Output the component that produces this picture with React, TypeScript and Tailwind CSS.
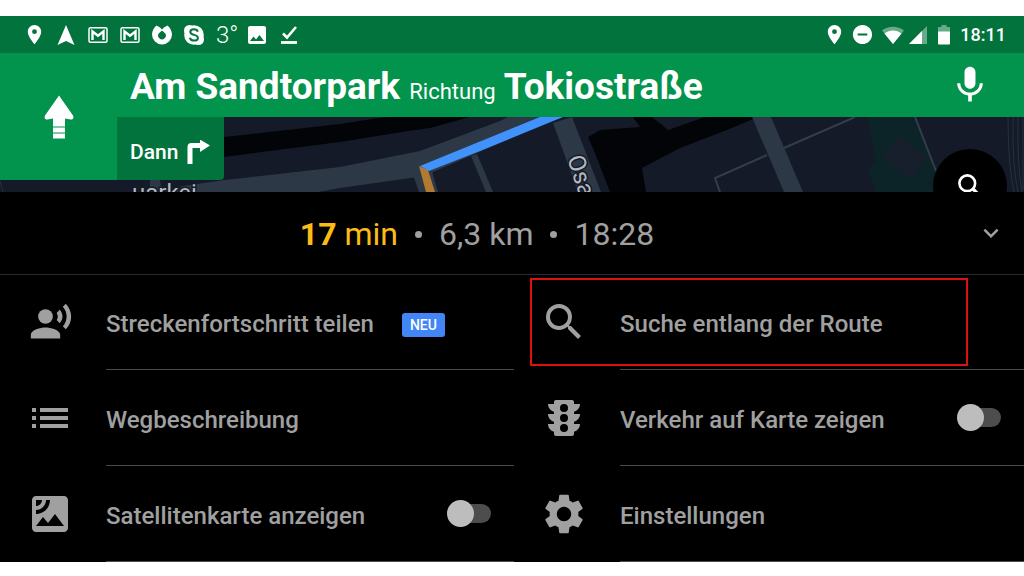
import { useId, useState } from "react";
import type { ReactNode } from "react";
import {
  MdDoNotDisturbOn,
  MdExpandMore,
  MdImage,
  MdList,
  MdLocationOn,
  MdMic,
  MdRecordVoiceOver,
  MdSatellite,
  MdSearch,
  MdSettings,
} from "react-icons/md";

function GmailIcon() {
  return (
    <svg viewBox="0 0 20 16" className="h-4 w-5" aria-hidden="true">
      <rect x="1" y="0.8" width="18" height="14.400" rx="1.500" fill="none" stroke="currentColor" strokeWidth="1.500" />
      <path d="M4.500 13V4.500L10 8.800L15.500 4.500V13" fill="none" stroke="currentColor" strokeWidth="2.400" />
    </svg>
  );
}

function TrafficLightIcon() {
  return (
    <svg viewBox="0 0 24 24" className="size-12" aria-hidden="true">
      <path
        fill="currentColor"
        fillRule="evenodd"
        d="M20 10H17V8.860C18.720 8.410 20 6.860 20 5H17V4C17 3.450 16.550 3 16 3H8C7.450 3 7 3.450 7 4V5H4C4 6.860 5.280 8.410 7 8.860V10H4C4 11.860 5.280 13.410 7 13.860V15H4C4 16.860 5.280 18.410 7 18.860V20C7 20.550 7.450 21 8 21H16C16.550 21 17 20.550 17 20V18.860C18.720 18.410 20 16.860 20 15H17V13.860C18.720 13.410 20 11.860 20 10ZM12 19A2 2 0 1 1 12 15A2 2 0 0 1 12 19ZM12 14A2 2 0 1 1 12 10A2 2 0 0 1 12 14ZM12 9A2 2 0 1 1 12 5A2 2 0 0 1 12 9Z"
      />
    </svg>
  );
}

function StatusBar() {
  return (
    <div className="flex h-[37px] items-center justify-between bg-[#02733c] pr-[18px] pl-[18px]">
      <div className="flex items-center">
        <div className="grid grid-cols-[repeat(6,32px)] place-items-center">
          <MdLocationOn className="size-[23px]" />
          <svg viewBox="0 0 18 22" className="h-[22px] w-[18px]" aria-hidden="true">
            <path d="M9 1L17.500 21L9 17L0.500 21Z" fill="currentColor" />
          </svg>
          <GmailIcon />
          <GmailIcon />
          <svg viewBox="0 0 20 20" className="size-5" aria-hidden="true">
            <path
              d="M4.500 0.500L8 2.500L10 4.500L12 2.500L15.500 0.500C18 2.500 20 6 20 9.500A10 10 0 0 1 0 9.500C0 6 2 2.500 4.500 0.500ZM10 5.500L7.200 8A3.800 3.800 0 1 0 12.800 8Z"
              fill="currentColor"
              fillRule="evenodd"
            />
          </svg>
          <svg viewBox="0 0 22 22" className="size-[22px]" aria-hidden="true">
            <circle cx="11" cy="11" r="9.800" fill="currentColor" />
            <circle cx="6.500" cy="6.500" r="5.500" fill="currentColor" />
            <circle cx="15.500" cy="15.500" r="5.500" fill="currentColor" />
            <path
              d="M14.800 7.800C14.300 5.900 12.800 5.300 11 5.300C8.900 5.300 7.300 6.300 7.300 8C7.300 11.700 14.900 10 14.900 13.700C14.900 15.500 13.200 16.600 11 16.600C8.900 16.600 7.300 15.700 6.900 13.700"
              fill="none"
              stroke="#02733c"
              strokeWidth="2"
            />
          </svg>
        </div>
        <span className="ml-1.5 text-2xl leading-6 font-light">3°</span>
        <MdImage className="ml-[7px] size-6" />
        <svg viewBox="0 0 18 20" className="ml-[11px] h-5 w-[18px]" aria-hidden="true">
          <path d="M3 8.500L7 12.500L16 2" fill="none" stroke="currentColor" strokeWidth="2.600" />
          <path d="M1 17.500H17" stroke="currentColor" strokeWidth="2.800" />
        </svg>
      </div>
      <div className="flex items-center">
        <MdLocationOn className="size-[23px]" />
        <MdDoNotDisturbOn className="ml-[5px] size-[23px]" />
        <svg viewBox="0 0 24 20" className="ml-[7px] h-5 w-6" aria-hidden="true">
          <path d="M1 5.500C7.500 0.500 16.500 0.500 23 5.500L12 19Z" fill="currentColor" opacity="0.4" />
          <path d="M3.500 8.500C8.500 4.500 15.500 4.500 20.500 8.500L12 19Z" fill="currentColor" />
        </svg>
        <svg viewBox="0 0 20 20" className="ml-[3px] size-5" aria-hidden="true">
          <path d="M19 1V19H1Z" fill="currentColor" opacity="0.4" />
          <path d="M14 6V19H1Z" fill="currentColor" />
        </svg>
        <svg viewBox="0 0 12 20" className="ml-2.5 h-5 w-3" aria-hidden="true">
          <path d="M3.500 0H8.500V2H12V7H0V2H3.500Z" fill="currentColor" opacity="0.4" />
          <path d="M0 6.500H12V18.500Q12 19.500 11 19.500H1Q0 19.500 0 18.500Z" fill="currentColor" />
        </svg>
        <span className="ml-2.5 text-[18px] leading-6 font-medium">18:11</span>
      </div>
    </div>
  );
}

function MapView() {
  return (
    <svg
      viewBox="0 117 1024 75"
      preserveAspectRatio="xMidYMid slice"
      className="col-span-full row-start-2 h-full w-full bg-[#141a27]"
      aria-hidden="true"
    >
      <g fill="#020407">
        <path d="M224 137L340 124L385 117H470L430 128L408 131L340 142L224 157Z" />
        <path d="M588 137L600 130L640 127L633 117H652L668 130L705 117H753V119L727 130L680 148L642 168L646 192H610L595 153Z" />
      </g>
      <path d="M867 117H914L936 171V192H876L868 170L876 160Z" fill="#0c2428" />
      <path d="M900 136L927 158L910 179L882 157Z" fill="#171f2c" />
      <g fill="#2d3846">
        <path d="M150 180H160L162 192H150Z" />
        <path d="M176 187L225 180L340 167L420 151L500 121L508 117H560L424 176L340 188L318 192H176Z" />
        <path d="M413 175L421 165L431 168L438 192H419Z" />
        <path d="M553 123L572 117L601 192H578Z" />
        <path d="M752 117H771L803 192H784Z" />
        <path d="M471 156L477 154L493 192H486Z" />
      </g>
      <g fill="none" stroke="#343d4b" strokeWidth="2">
        <path d="M855 117L784 148M767 155L715 178L720 192" />
        <path d="M915 117L936 171" />
      </g>
      <g fill="none" stroke="#263140">
        <path d="M0 181L3 192M1008 117Q1008 165 1014 192M1013 117Q1012 165 1018 192M1018 117Q1017 165 1022 192M1023 117V190" />
      </g>
      <path d="M419 166L428 170L435 192H426Z" fill="#b27a31" />
      <path d="M420 166L540 117H563L480 151L429 171Z" fill="#4192fb" />
      <g
        fill="#b5b9bf"
        stroke="#141a27"
        strokeWidth="3"
        paintOrder="stroke"
        fontFamily="Roboto, sans-serif"
        fontSize="24"
      >
        <text x="132" y="201">uarkei</text>
        <text transform="translate(567 158) rotate(72)">Osa</text>
      </g>
    </svg>
  );
}

function Switch({ id }: { id: string }) {
  const [on, setOn] = useState(false);
  return (
    <input
      id={id}
      type="checkbox"
      role="switch"
      checked={on}
      onChange={() => setOn(!on)}
      className="relative mr-[23px] h-[19px] w-[42px] shrink-0 cursor-pointer appearance-none rounded-full bg-[#4d4d4d] before:absolute before:-top-1 before:-left-0.5 before:size-[27px] before:rounded-full before:bg-[#bdbdbd] checked:before:left-[17px]"
    />
  );
}

type RowProps = {
  icon: ReactNode;
  label: string;
  badge?: string;
  toggle?: boolean;
  highlighted?: boolean;
};

function MenuRow({ icon, label, badge, toggle, highlighted }: RowProps) {
  const id = useId();
  const text = <span className="block pt-1 leading-8 whitespace-nowrap">{label}</span>;
  return (
    <li className="relative flex h-24">
      <span className="flex w-[106px] shrink-0 items-center pl-[26px]">{icon}</span>
      <div className="flex min-w-0 flex-1 items-center border-b border-[#4a4a4a]">
        {toggle ? (
          <label htmlFor={id} className="flex-1 cursor-pointer">
            {text}
          </label>
        ) : (
          <button type="button" className="flex flex-1 cursor-pointer items-center gap-7 text-left">
            {text}
            {badge && (
              <span className="mt-1.5 rounded-[3px] bg-[#4285f4] px-2 text-sm leading-6 font-medium text-white">
                {badge}
              </span>
            )}
          </button>
        )}
        {toggle && <Switch id={id} />}
      </div>
      {highlighted && (
        <span className="pointer-events-none absolute top-1 right-14 bottom-1 left-4 border-2 border-[#dd1111]" />
      )}
    </li>
  );
}

export default function App() {
  return (
    <div className="min-h-screen bg-white py-4 font-['Roboto',sans-serif] text-white">
      <StatusBar />
      <header className="grid grid-cols-[117px_1fr] grid-rows-[64px_75px] overflow-hidden">
        <div className="col-span-full row-start-1 flex items-center justify-between bg-[#02934d] pr-8 pl-[130px]">
          <h1 className="pt-2 text-[37px] leading-10 font-bold whitespace-nowrap">
            Am Sandtorpark <span className="text-[22px] font-normal">Richtung</span> Tokiostraße
          </h1>
          <button type="button" aria-label="Spracheingabe" className="cursor-pointer">
            <MdMic className="size-11" />
          </button>
        </div>
        <MapView />
        <div className="col-start-1 row-span-2 row-start-1 flex h-[127px] items-center justify-center bg-[#02934d]">
          <svg viewBox="0 0 30 44" className="h-11 w-[30px]" aria-hidden="true">
            <path
              d="M15 0.500L29 20.500Q30.500 24.500 26.500 24.500L21 23.500V31.500H9V23.500L3.500 24.500Q-0.500 24.500 1 20.500Z"
              fill="currentColor"
            />
            <path d="M9 32.500H21V37.500H9ZM9 38.500H21V43.500H9Z" fill="currentColor" />
          </svg>
        </div>
        <div className="col-start-2 row-start-2 flex h-[63px] items-center gap-[9px] justify-self-start rounded-br-sm bg-[#02733c] pt-2 pr-3.5 pl-[13px]">
          <span className="text-[21px] font-medium">Dann</span>
          <svg viewBox="0 0 23 26" className="h-[26px] w-[23px]" aria-hidden="true">
            <path d="M3 24V7Q3 5.500 4.500 5.500H14" fill="none" stroke="currentColor" strokeWidth="5" />
            <path d="M13 -0.500L23 5.500L13 12Z" fill="currentColor" />
          </svg>
        </div>
        <div className="relative col-start-2 row-start-2">
          <button
            type="button"
            aria-label="Suchen"
            className="absolute top-8 right-[17px] flex size-[74px] cursor-pointer items-center justify-center rounded-full bg-black"
          >
            <svg viewBox="0 0 22 22" className="size-6" aria-hidden="true">
              <circle cx="8.500" cy="8.500" r="7.200" fill="none" stroke="currentColor" strokeWidth="2.400" />
              <path d="M13.500 13.500L20 20" stroke="currentColor" strokeWidth="3" />
            </svg>
          </button>
        </div>
      </header>
      <main className="bg-black text-[#a0a0a0]">
        <div className="grid h-[83px] grid-cols-[1fr_auto_1fr] items-center border-b border-[#2a2a2a]">
          <p className="col-start-2 flex items-center gap-[17px] pt-0.5 pr-[70px] text-[32px] leading-10">
            <span className="text-[#fbbc15]">
              <strong className="font-bold">17</strong> min
            </span>
            <span className="size-[7px] rounded-full bg-[#a0a0a0]" />
            <span>6,3 km</span>
            <span className="size-[7px] rounded-full bg-[#a0a0a0]" />
            <span>18:28</span>
          </p>
          <button type="button" aria-label="Minimieren" className="mr-[18px] cursor-pointer justify-self-end">
            <MdExpandMore className="size-[30px]" />
          </button>
        </div>
        <div className="-mt-px grid grid-cols-[514fr_510fr] text-2xl font-medium">
          <ul>
            <MenuRow
              icon={<MdRecordVoiceOver className="ml-[3px] size-11" />}
              label="Streckenfortschritt teilen"
              badge="NEU"
            />
            <MenuRow icon={<MdList className="size-12" />} label="Wegbeschreibung" />
            <MenuRow icon={<MdSatellite className="size-12" />} label="Satellitenkarte anzeigen" toggle />
          </ul>
          <ul>
            <MenuRow icon={<MdSearch className="size-12" />} label="Suche entlang der Route" highlighted />
            <MenuRow icon={<TrafficLightIcon />} label="Verkehr auf Karte zeigen" toggle />
            <MenuRow icon={<MdSettings className="size-12" />} label="Einstellungen" />
          </ul>
        </div>
      </main>
    </div>
  );
}
